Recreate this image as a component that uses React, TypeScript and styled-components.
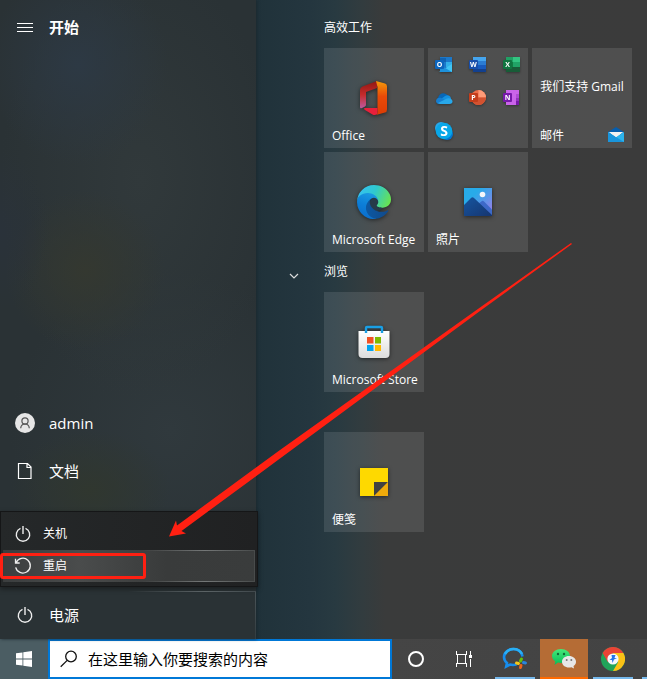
import React from "react";
import styled, { createGlobalStyle } from "styled-components";

const GlobalStyle = createGlobalStyle`
  * { box-sizing: border-box; }
  body {
    margin: 0;
    background: #3a3a3a;
    color: #fff;
    font: 12px/16px "Open Sans", "Noto Sans CJK SC", sans-serif;
  }
  button, input { font: inherit; color: inherit; }
  svg { display: block; }
`;

const Desktop = styled.div`
  position: relative;
  display: flex;
  flex-direction: column;
  min-height: 100vh;
  overflow: hidden;
`;

const StartMenu = styled.main`
  position: relative;
  flex: 1;
  display: flex;
  background: linear-gradient(90deg, #20323a 256px, #24363f 310px, #283a41 335px, #323c3f 362px, #3a3b3b 385px, #3b3b3b 100%);
`;

const Sidebar = styled.nav`
  width: 256px;
  flex: none;
  display: flex;
  flex-direction: column;
  padding-top: 3px;
  background:
    radial-gradient(ellipse 90px 100px at 78px 65px, #2d3944 0%, transparent 100%),
    radial-gradient(ellipse 50px 80px at 0 230px, #2a323a 0%, transparent 100%),
    radial-gradient(ellipse 80px 80px at 85px 270px, #343830 0%, transparent 100%),
    radial-gradient(ellipse 80px 60px at 90px 490px, #30372f 0%, transparent 100%),
    radial-gradient(ellipse 140px 220px at 140px 180px, #31393b 0%, transparent 100%),
    radial-gradient(ellipse 160px 160px at 170px 430px, #30393d 0%, transparent 100%),
    #2a3235;
  box-shadow: 1px 0 3px #1a282f;
`;

const SideItem = styled.button<{ $heading?: boolean; $last?: boolean }>`
  display: flex;
  align-items: center;
  gap: 14px;
  width: 100%;
  height: 48px;
  padding: 0 15px;
  border: 0;
  background: none;
  text-align: left;
  font-size: 15px;
  line-height: 20px;
  font-weight: ${(p) => (p.$heading ? 700 : 400)};
  margin-bottom: ${(p) => (p.$heading ? "auto" : "0")};
  ${(p) =>
    p.$last &&
    `margin-top: 96px;
     background:
       linear-gradient(90deg, transparent 50%, #626a6d 80%, #454e52) top / 100% 1px no-repeat,
       linear-gradient(#4a5458, #333d41) right / 1px 100% no-repeat;`}
`;

const PowerMenu = styled.div`
  position: absolute;
  left: 0;
  bottom: 52px;
  width: 258px;
  padding: 6px 2px 4px;
  border: 1px solid #151617;
  background: linear-gradient(90deg, #252829, #202122);
  box-shadow: 0 2px 5px #0006;
`;

const PowerItem = styled.button<{ $active?: boolean }>`
  position: relative;
  display: flex;
  align-items: center;
  gap: 10px;
  width: 100%;
  height: 32px;
  padding: 0 9px;
  border: 1px solid transparent;
  background: ${(p) => (p.$active ? "linear-gradient(90deg, #3b3e3f, #4a4c4c 30%, #393b3b 65%, #3a3c3c)" : "none")};
  ${(p) => p.$active && "border-image: linear-gradient(90deg, transparent 55%, #747777 80%, #484b4b) 1;"}
  text-align: left;
`;

const Marker = styled.span`
  position: absolute;
  left: -4px;
  top: 2px;
  width: 146px;
  height: 26px;
  border: 3px solid #ff2012;
  border-radius: 3px;
`;

const Tiles = styled.section`
  flex: 1;
  min-width: 0;
  padding: 8px 15px 0 30px;
`;

const GroupHeader = styled.h2`
  display: grid;
  grid-template-columns: 38px 1fr;
  align-items: center;
  height: 40px;
  margin: 0;
  font-size: 12px;
  font-weight: 400;
`;

const TileGrid = styled.div`
  display: grid;
  grid-template-columns: repeat(auto-fill, 100px);
  grid-auto-rows: 100px;
  gap: 4px;
  margin-left: 38px;
`;

const Tile = styled.button`
  display: grid;
  grid-template: 100% / 100%;
  padding: 0;
  border: 0;
  background: #ffffff1b;
  white-space: nowrap;
  text-align: left;
  > * { grid-area: 1 / 1; }
`;

const TileIcon = styled.span`
  place-self: center;
  filter: drop-shadow(0 1px 2px #0008);
`;

const TileLabel = styled.span`
  align-self: end;
  padding: 0 8px 4px;
`;

const LiveText = styled.span`
  align-self: start;
  justify-self: center;
  padding-top: 31px;
`;

const TileBadge = styled.span`
  place-self: end;
  padding: 0 8px 6px;
`;

const FolderTile = styled.div`
  display: grid;
  grid-template-columns: repeat(3, 18px);
  grid-auto-rows: 18px;
  gap: 15px 16px;
  padding: 8px 7px;
  background: #ffffff1b;
`;

const Taskbar = styled.footer`
  display: flex;
  height: 40px;
  overflow: hidden;
  background: linear-gradient(90deg, #4b5d63 48px, #454545 380px, #434343);
`;

const TaskButton = styled.button<{ $running?: boolean; $alert?: boolean; $gap?: number }>`
  flex: 0 0 48px;
  height: 40px;
  display: grid;
  place-items: center;
  margin-left: ${(p) => p.$gap ?? 0}px;
  padding: 0;
  border: 0;
  background: ${(p) =>
    p.$alert
      ? "linear-gradient(#ff6a00, #ff6a00) bottom / 100% 2px no-repeat #b56c35"
      : p.$running
        ? "linear-gradient(#76b9ed, #76b9ed) bottom / 40px 2px no-repeat"
        : "none"};
`;

const SearchBox = styled.label`
  display: flex;
  align-items: center;
  gap: 10px;
  flex: 0 0 344px;
  padding: 0 10px;
  border: 2px solid #0078d7;
  background: #fff;
  color: #000;
`;

const SearchInput = styled.input`
  flex: 1;
  min-width: 0;
  padding: 0;
  border: 0;
  outline: 0;
  background: none;
  font-size: 15px;
  line-height: 20px;
  &::placeholder { color: #000; opacity: 1; }
`;

const Arrow = styled.svg`
  position: absolute;
  left: 0;
  top: 0;
  pointer-events: none;
`;

const MenuIcon = () => (
  <svg width="20" height="20" fill="none" stroke="#fff" shapeRendering="crispEdges">
    <path d="M2 6.5h16M2 10.5h16M2 14.5h16" />
  </svg>
);

const UserIcon = () => (
  <svg width="20" height="20" fill="none" stroke="#555" strokeWidth="1.2">
    <circle cx="10" cy="10" r="10" fill="#e6e6e6" stroke="none" />
    <circle cx="10" cy="8" r="3.1" />
    <path d="M5.7 15.2c.2-2.6 1.8-4.2 4.3-4.2s4.100 1.600 4.300 4.200" />
  </svg>
);

const DocIcon = () => (
  <svg width="20" height="20" fill="none" stroke="#fff" strokeWidth="1.2">
    <path d="M3.500 2.500h9l3.500 3.500v11.500h-12.500zM12 2.500v4h4" />
  </svg>
);

const PowerIcon = () => (
  <svg width="20" height="20" viewBox="0 0 20 20" fill="none" stroke="#eee" strokeWidth="1.4">
    <path d="M7.500 4.400a6.700 6.700 0 1 0 5 0M10 2v8" />
  </svg>
);

const RestartIcon = () => (
  <svg width="20" height="20" fill="none" stroke="#eee" strokeWidth="1.3">
    <path d="M3.200 6.500a7.400 7.400 0 1 1-.5 4.800M2.500 2.800v4.200h4.200" />
  </svg>
);

const ChevronIcon = () => (
  <svg width="16" height="16" fill="none" stroke="#ddd" strokeWidth="1.2">
    <path d="M4 10l4 4 4-4" />
  </svg>
);

const OfficeIcon = () => (
  <svg width="32" height="36" viewBox="0 0 32 36">
    <defs>
      <linearGradient id="ofL" x1="0" y1="0" x2="0" y2="1">
        <stop stopColor="#8f1712" /><stop offset=".5" stopColor="#c52b2b" /><stop offset="1" stopColor="#bd5aa0" />
      </linearGradient>
      <linearGradient id="ofR" x1="0" y1="0" x2="0" y2="1">
        <stop stopColor="#f59a0a" /><stop offset=".45" stopColor="#e84a08" /><stop offset="1" stopColor="#dc3c04" />
      </linearGradient>
    </defs>
    <path d="M19 1 4.500 6.500Q2 7.500 2 10v17q0 2 2 1l3-1.500q1-.5 1-2V12l11-4z" fill="url(#ofL)" />
    <path d="m18 1 9 2.500q2 .5 2 3v23q0 2.500-2 3L18 35q1.500-.5 1.500-3V7z" fill="url(#ofR)" />
    <path d="M7 28h12.500v4q0 3-3 3-1 0-2-.6L7 30q-2-1.500 0-2" fill="#e8203b" />
  </svg>
);

const EdgeIcon = () => (
  <svg width="34" height="34" viewBox="0 0 256 256">
    <defs>
      <linearGradient id="edA" x1="0" y1=".5" x2="1" y2=".6"><stop stopColor="#0c59a4" /><stop offset="1" stopColor="#114a8b" /></linearGradient>
      <linearGradient id="edB" x1=".6" y1="0" x2=".3" y2="1"><stop stopColor="#1b9de2" /><stop offset=".5" stopColor="#0d7fd8" /><stop offset="1" stopColor="#0a6ccb" /></linearGradient>
      <linearGradient id="edC" x1="0" y1=".4" x2="1" y2=".7"><stop stopColor="#35c1f1" /><stop offset=".45" stopColor="#2fc9cf" /><stop offset="1" stopColor="#6be34c" /></linearGradient>
    </defs>
    <circle cx="150" cy="140" r="55" fill="#263b49" />
    <path fill="url(#edA)" d="M231 190.500c-3.400 1.800-6.900 3.400-10.500 4.700a101.700 101.700 0 0 1-35.900 6.500c-47.300 0-88.500-32.500-88.500-74.300a31.500 31.500 0 0 1 16.400-27.300c-42.800 1.800-53.800 46.400-53.800 72.500 0 74 68.100 81.400 82.800 81.400 7.900 0 19.800-2.300 27-4.600l1.300-.4a128.300 128.300 0 0 0 66.600-52.800 4 4 0 0 0-5.400-5.700z" />
    <path fill="url(#edB)" d="M105.700 241.500a79.200 79.200 0 0 1-22.700-21.300 80.700 80.700 0 0 1 29.500-120c3.200-1.500 8.500-4.100 15.600-4a32.400 32.400 0 0 1 25.700 13 31.900 31.900 0 0 1 6.300 18.700c0-.2 24.500-79.600-80-79.600-43.900 0-80 41.600-80 78.200a130.100 130.100 0 0 0 12.100 56 128 128 0 0 0 156.400 67 75.500 75.500 0 0 1-62.800-8z" />
    <path fill="url(#edC)" d="M152.300 148.900c-.9 1-3.400 2.500-3.400 5.600 0 2.600 1.700 5.200 4.800 7.300 14.300 10 41.400 8.600 41.500 8.600a59.600 59.600 0 0 0 30.300-8.300A61.400 61.400 0 0 0 256 109.200c.3-22.400-8-37.300-11.300-43.900C223.500 23.900 177.700 0 128 0A128 128 0 0 0 0 126.200c.5-36.500 36.800-66 80-66 3.500 0 23.500.300 42 10.100 16.300 8.500 24.900 18.900 30.800 29.200 6.200 10.700 7.300 24.100 7.300 29.500s-2.700 13.300-7.800 19.900z" />
  </svg>
);

const PhotosIcon = () => (
  <svg width="28" height="28">
    <defs>
      <linearGradient id="phS" x1="0" y1="0" x2="1" y2="1"><stop offset=".3" stopColor="#28abe9" /><stop offset="1" stopColor="#a777e8" /></linearGradient>
      <linearGradient id="phM" x1="0" y1="0" x2="1" y2="1"><stop stopColor="#1555a0" /><stop offset="1" stopColor="#16356f" /></linearGradient>
    </defs>
    <path d="M0 0h28v28H0z" fill="url(#phS)" />
    <path d="m14 16 4-3q1-.5 2 .5l8 8V28H14z" fill="#3d69c8" />
    <path d="m0 17 7-7q1.500-1.500 3 0l18 17v1H0z" fill="url(#phM)" />
    <circle cx="18.500" cy="6.500" r="2.800" fill="#f5f7fa" />
  </svg>
);

const StoreIcon = () => (
  <svg width="32" height="34">
    <defs><linearGradient id="stB" x1="0" y1="0" x2="0" y2="1"><stop stopColor="#fff" /><stop offset="1" stopColor="#dcdcdc" /></linearGradient></defs>
    <path d="M.5 6h31v23q0 4-4 4h-23q-4 0-4-4z" fill="url(#stB)" />
    <path d="M8 8V3q0-1 1-1h14q1 0 1 1v5" fill="none" stroke="#199fe5" strokeWidth="2.400" />
    <path d="M9 12h6.500v6.500H9z" fill="#f25022" /><path d="M17 12h6v6.500h-6z" fill="#7fba00" />
    <path d="M9 20h6.500v6H9z" fill="#00a4ef" /><path d="M17 20h6v6h-6z" fill="#ffb900" />
  </svg>
);

const NotesIcon = () => (
  <svg width="28" height="28">
    <path d="M0 0h28v14L14 28H0z" fill="#fed900" />
    <path d="M14 14h14L14 28z" fill="#414141" /><path d="M28 14v14H14z" fill="#efaa0b" />
  </svg>
);

const Letter = styled.text<{ $size?: number }>`
  font-family: "Open Sans", sans-serif;
  font-size: ${(p) => p.$size ?? 7}px;
  font-weight: 700;
  fill: #fff;
  text-anchor: middle;
`;

const OutlookIcon = () => (
  <svg width="18" height="18">
    <path d="M5 1h12v15H5z" fill="#1b78ca" /><path d="M5 2h6v4H5z" fill="#1262b0" /><path d="M11 6h6v5h-6z" fill="#31afe8" />
    <path d="m4 16 13-8v8z" fill="#40c5f4" /><path d="m5 9 12 7H5z" fill="#1d91dc" />
    <rect x="0" y="4" width="9" height="9" rx="1" fill="#0c65bd" /><Letter x="4.500" y="11">O</Letter>
  </svg>
);

const WordIcon = () => (
  <svg width="18" height="18">
    <path d="M4 1h13v4H4z" fill="#45a5ee" /><path d="M4 5h13v4H4z" fill="#2b7cd3" /><path d="M4 9h13v4H4z" fill="#185abd" /><path d="M4 13h13v3H4z" fill="#12408f" />
    <rect x="0" y="4" width="9" height="9" rx="1" fill="#174eab" /><Letter x="4.500" y="11">W</Letter>
  </svg>
);

const ExcelIcon = () => (
  <svg width="18" height="18">
    <path d="M3 1h7v5H3z" fill="#20a164" /><path d="M10 1h7v5h-7z" fill="#33c481" /><path d="M3 6h7v5H3z" fill="#107c41" /><path d="M10 6h7v5h-7z" fill="#21a366" /><path d="M3 11h14v5H3z" fill="#185c37" />
    <rect x="0" y="4" width="9" height="9" rx="1" fill="#107540" /><Letter x="4.500" y="11">X</Letter>
  </svg>
);

const OneDriveIcon = () => (
  <svg width="18" height="18">
    <path d="M3 9c1-5 7-6.500 10-2l-2 5H3z" fill="#0767b8" /><path d="M10 7c3-2 6 0 6 3l-2 4-8-4z" fill="#1490df" />
    <path d="M1 12c0-3 3-4 5.500-3L13 13l-2 2H4c-2 0-3-1.500-3-3" fill="#167ed0" /><path d="m3 14 9-4.500c3-1 5.500.5 5.500 3 0 1.500-1 2.500-3 2.500H5z" fill="#28a8ea" />
  </svg>
);

const PowerPointIcon = () => (
  <svg width="18" height="18">
    <circle cx="9.500" cy="8.500" r="7.500" fill="#ed6c47" /><path d="M9.500 1A7.500 7.500 0 0 1 17 8.500H9.500z" fill="#ff9b78" /><path d="M2 8.500h15a7.500 7.500 0 0 1-15 0" fill="#d35230" />
    <rect x="0" y="4" width="9" height="9" rx="1" fill="#c43e1c" /><Letter x="4.500" y="11">P</Letter>
  </svg>
);

const OneNoteIcon = () => (
  <svg width="18" height="18">
    <path d="M3 1h13v15H3z" fill="#ca64ea" /><path d="M13 5h3v4h-3z" fill="#ae4bd5" /><path d="M13 9h3v3h-3z" fill="#9332bf" /><path d="M13 12h3v4h-3z" fill="#7719aa" />
    <rect x="0" y="4" width="9" height="9" rx="1" fill="#7719aa" /><Letter x="4.500" y="11">N</Letter>
  </svg>
);

const SkypeIcon = () => (
  <svg width="18" height="18">
    <circle cx="6" cy="6" r="6" fill="#28a8ea" /><circle cx="12" cy="12" r="6" fill="#0078d4" /><circle cx="9" cy="9" r="8.300" fill="#08a7e8" />
    <Letter x="9" y="14" $size={14}>S</Letter>
  </svg>
);

const MailIcon = () => (
  <svg width="16" height="15">
    <path d="m0 5 8-5 8 5v2H0z" fill="#075ead" /><path d="M1 5h14L8 11z" fill="#f2f2f2" />
    <path d="m0 5 8 5 8-5v10H0z" fill="#2cb4ed" /><path d="m0 5 16 10H0z" fill="#1995dc" /><path d="M1 5h14l-7 5z" fill="#f2f2f2" />
  </svg>
);

const WindowsIcon = () => (
  <svg width="16" height="16" fill="#fff">
    <path d="m0 2.300 6.500-.9v6.200H0zM7.300 1.300 16 0v7.600H7.300zM0 8.400h6.500v6.200L0 13.700zM7.300 8.400H16V16l-8.700-1.200z" />
  </svg>
);

const SearchIcon = () => (
  <svg width="18" height="18" fill="none" stroke="#111" strokeWidth="1.300">
    <circle cx="11" cy="6.500" r="5.300" /><path d="M7.200 10.400.7 16.800" />
  </svg>
);

const CortanaIcon = () => (
  <svg width="18" height="18" fill="none" stroke="#fff" strokeWidth="2"><circle cx="9" cy="9" r="7" /></svg>
);

const TaskViewIcon = () => (
  <svg width="18" height="18" fill="none" stroke="#fff" shapeRendering="crispEdges">
    <path d="M1.500 1v3.500h10V1M1.500 17v-3.500h10V17M2.500 5v8M10.500 5v8M15.500 1v4M15.500 9v8" /><path d="M14 5h3v3h-3z" fill="#fff" stroke="none" />
  </svg>
);

const WeComIcon = () => (
  <svg width="26" height="24" fill="none">
    <path d="M20.500 9.500C20 5 16 2 11.500 2 6.500 2 2 5.500 2 10c0 2.500 1.200 4.500 3 6l-.8 3.500L8 17.600c2 .6 4 .6 6.500 0" stroke="#168ded" strokeWidth="2.600" />
    <path d="M3 7C5 3.500 8 2 11.500 2c4 0 7 2 8.500 5" stroke="#29aff5" strokeWidth="2.600" />
    <g strokeWidth="3" strokeLinecap="round">
      <path d="m19.500 12-1 2" stroke="#61c20c" /><path d="m23.500 16-2-.5" stroke="#2886dd" /><path d="m18.500 20.500.5-2" stroke="#f06418" /><path d="m14.500 16 2 .5" stroke="#f6c71a" />
    </g>
  </svg>
);

const WeChatIcon = () => (
  <svg width="26" height="24">
    <defs><linearGradient id="wcG" x1="0" y1="0" x2="0" y2="1"><stop stopColor="#46e979" /><stop offset="1" stopColor="#05bd58" /></linearGradient></defs>
    <path d="M10 2c5 0 9 3 9 7s-4 7-9 7q-1.500 0-3-.4L3.500 18l.8-3.500C2.200 13 1 11.200 1 9c0-4 4-7 9-7" fill="url(#wcG)" />
    <circle cx="7" cy="7" r="1.200" fill="#126b38" /><circle cx="13" cy="7" r="1.200" fill="#126b38" />
    <path d="M18 9c4 0 7 2.500 7 5.700 0 2-1 3.300-2.500 4.300l.5 2.500-2.500-1.300q-1.200.3-2.500.3c-4 0-7-2.500-7-5.800S14 9 18 9" fill="#e7e7e7" />
    <circle cx="15.700" cy="13" r="1" fill="#777" /><circle cx="20.300" cy="13" r="1" fill="#777" />
  </svg>
);

const ChromeIcon = () => (
  <svg width="24" height="24">
    <circle cx="12" cy="12" r="12" fill="#20a45a" />
    <path d="M1.600 6A12 12 0 0 1 22.400 6H12L6.800 15z" fill="#ea4335" />
    <path d="M22.400 6A12 12 0 0 1 12 24l5.200-9L12 6z" fill="#fbc116" />
    <circle cx="12" cy="12" r="5.600" fill="#f5f7fc" />
    <path d="M10.500 8h4l-1 3H16l-3 1.500-1.500 3.500-.5-3H8.500L11 11z" fill="#2473e8" />
  </svg>
);

type App = { name: string; icon: React.ReactNode };

const AppTile = ({ name, icon }: App) => (
  <Tile>
    <TileIcon>{icon}</TileIcon>
    <TileLabel>{name}</TileLabel>
  </Tile>
);

const folderApps: App[] = [
  { name: "Outlook", icon: <OutlookIcon /> },
  { name: "Word", icon: <WordIcon /> },
  { name: "Excel", icon: <ExcelIcon /> },
  { name: "OneDrive", icon: <OneDriveIcon /> },
  { name: "PowerPoint", icon: <PowerPointIcon /> },
  { name: "OneNote", icon: <OneNoteIcon /> },
  { name: "Skype", icon: <SkypeIcon /> },
];

const FolderApp = styled.button`
  padding: 0;
  border: 0;
  background: none;
  filter: drop-shadow(0 1px 1px #0005);
`;

export default function App() {
  return (
    <Desktop>
      <GlobalStyle />
      <StartMenu>
        <Sidebar>
          <SideItem $heading><MenuIcon />开始</SideItem>
          <SideItem><UserIcon />admin</SideItem>
          <SideItem><DocIcon />文档</SideItem>
          <SideItem $last><PowerIcon />电源</SideItem>
        </Sidebar>
        <Tiles>
          <GroupHeader><span /><span>高效工作</span></GroupHeader>
          <TileGrid>
            <AppTile name="Office" icon={<OfficeIcon />} />
            <FolderTile>
              {folderApps.map((app) => <FolderApp key={app.name} aria-label={app.name}>{app.icon}</FolderApp>)}
            </FolderTile>
            <Tile>
              <LiveText>我们支持 Gmail</LiveText>
              <TileLabel>邮件</TileLabel>
              <TileBadge><MailIcon /></TileBadge>
            </Tile>
            <AppTile name="Microsoft Edge" icon={<EdgeIcon />} />
            <AppTile name="照片" icon={<PhotosIcon />} />
          </TileGrid>
          <GroupHeader><ChevronIcon /><span>浏览</span></GroupHeader>
          <TileGrid><AppTile name="Microsoft Store" icon={<StoreIcon />} /></TileGrid>
          <GroupHeader />
          <TileGrid><AppTile name="便笺" icon={<NotesIcon />} /></TileGrid>
        </Tiles>
        <PowerMenu>
          <PowerItem><PowerIcon />关机</PowerItem>
          <PowerItem $active><RestartIcon />重启<Marker /></PowerItem>
        </PowerMenu>
      </StartMenu>
      <Taskbar>
        <TaskButton aria-label="开始"><WindowsIcon /></TaskButton>
        <SearchBox>
          <SearchIcon />
          <SearchInput aria-label="搜索" placeholder="在这里输入你要搜索的内容" />
        </SearchBox>
        <TaskButton aria-label="Cortana"><CortanaIcon /></TaskButton>
        <TaskButton aria-label="任务视图"><TaskViewIcon /></TaskButton>
        <TaskButton aria-label="企业微信" $running $gap={3}><WeComIcon /></TaskButton>
        <TaskButton aria-label="微信" $alert $gap={1}><WeChatIcon /></TaskButton>
        <TaskButton aria-label="Chrome" $running $gap={1}><ChromeIcon /></TaskButton>
        <TaskButton aria-label="应用" $running $gap={1} />
      </Taskbar>
      <Arrow width="580" height="545" aria-hidden="true">
        <path d="M571 243 480 307.500 280 450 177 525.500 176 520.500 169 536.500 186 533.500 181.500 531 280 458.500 480 311 572 244z" fill="#ff2012" />
      </Arrow>
    </Desktop>
  );
}
